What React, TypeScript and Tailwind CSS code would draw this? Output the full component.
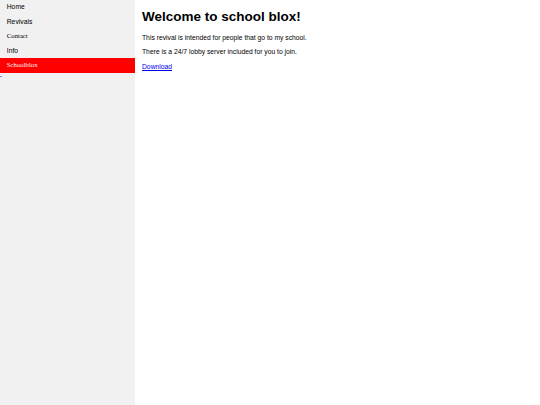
import React from 'react';

const sans = "font-['Liberation_Sans',Arial,sans-serif]";
const serif = "font-['Liberation_Serif','Times_New_Roman',serif]";

interface NavItem {
  label: string;
  serif?: boolean;
  active?: boolean;
}

const items: NavItem[] = [
  { label: 'Home' },
  { label: 'Revivals' },
  { label: 'Contact', serif: true },
  { label: 'Info' },
  { label: 'Schoolblox', serif: true, active: true },
];

export default function App() {
  return (
    <div className={`flex min-h-[405px] w-full bg-white text-black ${sans}`}>
      <div className="w-[135px] shrink-0 bg-[#f1f1f1]">
        {items.map((item) => (
          <div
            key={item.label}
            className={`h-[14.5px] px-[6.75px] text-[6.75px] leading-[14.5px] ${item.serif ? serif : sans} ${
              item.active ? 'bg-[#ff0000] text-white' : 'text-black'
            }`}
          >
            {item.label}
          </div>
        ))}
        {/* stray underlined link */}
        <div className="mt-[3px] h-[1px] w-[2px] bg-[#7b7bff]" />
      </div>

      <div className="flex-1 px-[7px]">
        <h1 className="mt-[9px] text-[13.5px] font-bold leading-[15.5px]">Welcome to school blox!</h1>
        <p className="mt-[9px] text-[6.75px] leading-[7.8px]">This revival is intended for people that go to my school.</p>
        <p className="mt-[6.75px] text-[6.75px] leading-[7.8px]">There is a 24/7 lobby server included for you to join.</p>
        <p className="mt-[6.75px] text-[6.75px] leading-[7.8px]">
          <a href="#" className="text-[#0000ee] underline">Download</a>
        </p>
      </div>
    </div>
  );
}
